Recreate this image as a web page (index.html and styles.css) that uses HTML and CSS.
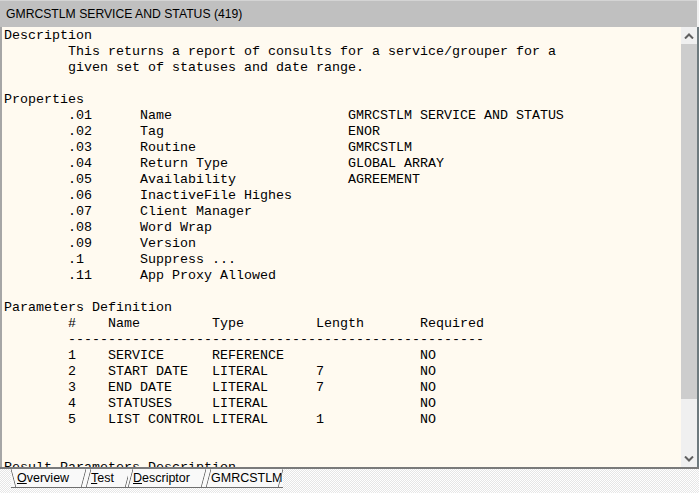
FILE: index.html
```html
<!DOCTYPE html>
<html>
<head>
<meta charset="utf-8">
<link rel="stylesheet" href="styles.css">
</head>
<body>
<div class="window">
  <div class="title">GMRCSTLM SERVICE AND STATUS (419)</div>
  <div class="main">
    <div class="content"><pre class="text">Description
        This returns a report of consults for a service/grouper for a
        given set of statuses and date range.

Properties
        .01      Name                      GMRCSTLM SERVICE AND STATUS
        .02      Tag                       ENOR
        .03      Routine                   GMRCSTLM
        .04      Return Type               GLOBAL ARRAY
        .05      Availability              AGREEMENT
        .06      InactiveFile Highes
        .07      Client Manager
        .08      Word Wrap
        .09      Version
        .1       Suppress ...
        .11      App Proxy Allowed

Parameters Definition
        #    Name         Type         Length       Required
        ----------------------------------------------------
        1    SERVICE      REFERENCE                 NO
        2    START DATE   LITERAL      7            NO
        3    END DATE     LITERAL      7            NO
        4    STATUSES     LITERAL                   NO
        5    LIST CONTROL LITERAL      1            NO


Result Parameters Description</pre></div>
    <div class="scrollbar">
      <div class="sb-btn">
        <svg width="10" height="6" viewBox="0 0 10 6"><polyline points="1,5.5 5,1.5 9,5.5" fill="none" stroke="#606060" stroke-width="2"/></svg>
      </div>
      <div class="sb-thumb"></div>
      <div class="sb-track"></div>
      <div class="sb-btn">
        <svg width="10" height="6" viewBox="0 0 10 6"><polyline points="1,0.5 5,4.5 9,0.5" fill="none" stroke="#606060" stroke-width="2"/></svg>
      </div>
    </div>
    <div class="edge"></div>
  </div>
  <div class="tabs">
    <div class="tab selected acc tab-overview">Overview</div>
    <div class="tab acc tab-test">Test</div>
    <div class="tab acc tab-desc">Descriptor</div>
    <div class="tab tab-gmr">GMRCSTLM</div>
  </div>
</div>
</body>
</html>
```
FILE: styles.css
```css
html, body {
  margin: 0;
  padding: 0;
}
body {
  width: 699px;
  height: 493px;
  overflow: hidden;
  background: #f0f0f0;
}
.window {
  display: flex;
  flex-direction: column;
  width: 699px;
  height: 493px;
}
.title {
  height: 27px;
  line-height: 26px;
  background: #c0c0c0;
  border-top: 1px solid #d4d4d4;
  box-sizing: border-box;
  padding-left: 6px;
  font-family: "Liberation Sans", Arial, sans-serif;
  font-size: 12.2px;
  color: #000;
  margin-right: 2px;
}
.main {
  display: flex;
  height: 440px;
}
.content {
  flex: 1;
  background: #fffaf0;
  border-left: 2px solid #a6a6a6;
  overflow: hidden;
  padding-left: 2px;
  padding-top: 1px;
}
.text {
  margin: 0;
  font-family: "Liberation Mono", "Courier New", monospace;
  font-size: 13.333px;
  line-height: 16px;
  color: #000;
}
.scrollbar {
  width: 16px;
  display: flex;
  flex-direction: column;
  background: #f0f0f0;
}
.sb-btn {
  height: 17px;
  display: flex;
  align-items: center;
  justify-content: center;
  background: #f0f0f0;
}
.sb-thumb {
  height: 355px;
  background: #cdcdcd;
}
.sb-track {
  flex: 1;
  background: #f0f0f0;
}
.edge {
  width: 2px;
  background: #6e7a7e;
}
.tabs {
  flex: 1;
  border-top: 2px solid #7a7a7a;
  background-color: #f4f4f4;
  background-image: repeating-conic-gradient(#ffffff 0 25%, #e6e6e6 0 50%);
  background-size: 2px 2px;
  padding-left: 11px;
  display: flex;
  align-items: flex-start;
  font-family: "Liberation Sans", Arial, sans-serif;
  font-size: 12.5px;
  color: #000;
}
.tab {
  position: relative;
  box-sizing: border-box;
  height: 19px;
  line-height: 18px;
  padding-left: 5px;
  border-bottom: 1px solid #6e6e6e;
  background: #f9f9f9;
  white-space: nowrap;
}
.tab-overview { width: 75px; padding-left: 6px; }
.tab-test { width: 44px; }
.tab-desc { width: 78px; margin-left: -2px; }
.tab-gmr { width: 77px; }
.tab::before,
.tab::after {
  content: "";
  position: absolute;
  top: 0;
  bottom: -1px;
  width: 5px;
}
.tab::before {
  left: 0;
  background: linear-gradient(to bottom right, transparent calc(50% - 0.8px), #6e6e6e 50%, transparent calc(50% + 0.8px));
}
.tab.selected::before {
  background: linear-gradient(to top right, transparent calc(50% - 0.8px), #6e6e6e 50%, transparent calc(50% + 0.8px));
}
.tab::after {
  right: 0;
  background: linear-gradient(to bottom right, transparent calc(50% - 0.8px), #6e6e6e 50%, transparent calc(50% + 0.8px));
}
.acc::first-letter {
  text-decoration: underline;
  text-underline-offset: 1px;
}
```
